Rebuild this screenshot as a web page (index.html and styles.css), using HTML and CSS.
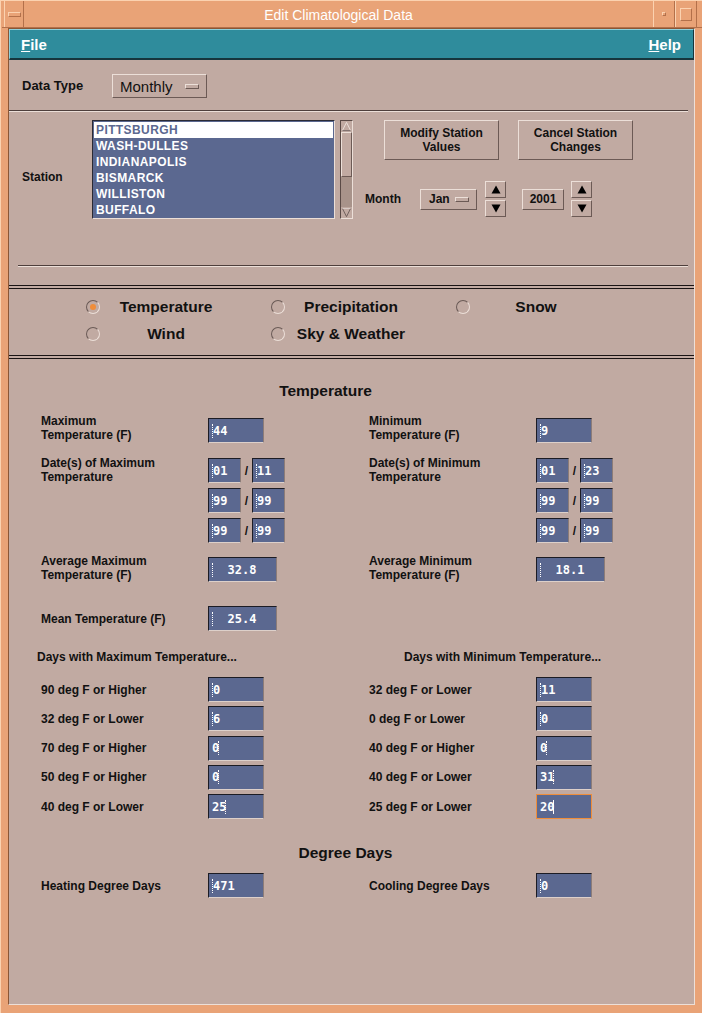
FILE: index.html
```html
<!DOCTYPE html>
<html lang="en">
<head>
    <meta charset="UTF-8">
    <title>Edit Climatological Data</title>
    <link rel="stylesheet" href="styles.css">
</head>
<body>
<div class="window">
    <div class="titlebar">
        <div class="tb-btn tb-menu"><span class="tb-dash"></span></div>
        <div class="tb-title">Edit Climatological Data</div>
        <div class="tb-btn tb-min"><span class="tb-dot"></span></div>
        <div class="tb-btn tb-max"><span class="tb-square"></span></div>
    </div>

    <div class="client">
        <div class="menubar">
            <span class="menu-item"><u>F</u>ile</span>
            <span class="menu-item"><u>H</u>elp</span>
        </div>

        <!-- data type -->
        <div class="datatype-row">
            <span class="label datatype-label">Data Type</span>
            <div class="option-menu option-large">Monthly <span class="option-ind"></span></div>
        </div>
        <div class="sep"></div>

        <!-- station picker -->
        <div class="station-row">
            <span class="label station-label">Station</span>
            <div class="station-list">
                <div class="list-item selected">PITTSBURGH</div>
                <div class="list-item">WASH-DULLES</div>
                <div class="list-item">INDIANAPOLIS</div>
                <div class="list-item">BISMARCK</div>
                <div class="list-item">WILLISTON</div>
                <div class="list-item">BUFFALO</div>
            </div>
            <div class="scrollbar">
                <svg class="scroll-arrow" viewBox="0 0 12 12"><path d="M1.5 10.5 L6 1.5 L10.5 10.5 Z" fill="none" stroke="#efe4de" stroke-width="1"/><path d="M1.5 10.5 H10.5" stroke="#6a5a56"/></svg>
                <div class="scroll-thumb"></div>
                <div class="scroll-trough"></div>
                <svg class="scroll-arrow" viewBox="0 0 12 12"><path d="M1.5 1.5 L6 10.5 L10.5 1.5 Z" fill="none" stroke="#6a5a56" stroke-width="1"/><path d="M1.5 1.5 H10.5" stroke="#efe4de"/></svg>
            </div>
            <div class="station-controls">
                <div class="station-buttons">
                    <button class="push">Modify Station<br>Values</button>
                    <button class="push">Cancel Station<br>Changes</button>
                </div>
                <div class="month-row">
                    <span class="label">Month</span>
                    <div class="option-menu option-small">Jan <span class="option-ind"></span></div>
                    <div class="spinner">
                        <span class="arrow-btn"><svg viewBox="0 0 10 9"><path d="M5 0.5 L9.5 8.5 H0.5 Z" fill="#000"/></svg></span>
                        <span class="arrow-btn"><svg viewBox="0 0 10 9"><path d="M0.5 0.5 H9.5 L5 8.5 Z" fill="#000"/></svg></span>
                    </div>
                    <div class="year-box">2001</div>
                    <div class="spinner">
                        <span class="arrow-btn"><svg viewBox="0 0 10 9"><path d="M5 0.5 L9.5 8.5 H0.5 Z" fill="#000"/></svg></span>
                        <span class="arrow-btn"><svg viewBox="0 0 10 9"><path d="M0.5 0.5 H9.5 L5 8.5 Z" fill="#000"/></svg></span>
                    </div>
                </div>
            </div>
        </div>
        <div class="sep sep-inset"></div>

        <!-- element type -->
        <div class="double-sep"></div>
        <div class="radio-grid">
            <div class="radio"><span class="radio-dot on"></span><span class="radio-text">Temperature</span></div>
            <div class="radio"><span class="radio-dot"></span><span class="radio-text">Precipitation</span></div>
            <div class="radio"><span class="radio-dot"></span><span class="radio-text">Snow</span></div>
            <div class="radio"><span class="radio-dot"></span><span class="radio-text">Wind</span></div>
            <div class="radio"><span class="radio-dot"></span><span class="radio-text">Sky &amp; Weather</span></div>
        </div>
        <div class="double-sep"></div>

        <!-- temperature values -->
        <div class="temp">
            <h2 class="section-title title-temp">Temperature</h2>

            <div class="trow trow-first">
                <span class="label">Maximum<br>Temperature (F)</span>
                <div class="cell drop4"><span class="field"><i class="caret"></i>44</span></div>
                <span class="label">Minimum<br>Temperature (F)</span>
                <div class="cell drop4"><span class="field"><i class="caret"></i>9</span></div>
            </div>

            <div class="trow trow-dates">
                <span class="label">Date(s) of Maximum<br>Temperature</span>
                <div class="cell date-stack">
                    <div class="date-pair"><span class="field date"><i class="caret"></i>01</span><span class="slash">/</span><span class="field date"><i class="caret"></i>11</span></div>
                    <div class="date-pair"><span class="field date"><i class="caret"></i>99</span><span class="slash">/</span><span class="field date"><i class="caret"></i>99</span></div>
                    <div class="date-pair"><span class="field date"><i class="caret"></i>99</span><span class="slash">/</span><span class="field date"><i class="caret"></i>99</span></div>
                </div>
                <span class="label">Date(s) of Minimum<br>Temperature</span>
                <div class="cell date-stack">
                    <div class="date-pair"><span class="field date"><i class="caret"></i>01</span><span class="slash">/</span><span class="field date"><i class="caret"></i>23</span></div>
                    <div class="date-pair"><span class="field date"><i class="caret"></i>99</span><span class="slash">/</span><span class="field date"><i class="caret"></i>99</span></div>
                    <div class="date-pair"><span class="field date"><i class="caret"></i>99</span><span class="slash">/</span><span class="field date"><i class="caret"></i>99</span></div>
                </div>
            </div>

            <div class="trow trow-avg">
                <span class="label">Average Maximum<br>Temperature (F)</span>
                <div class="cell drop3"><span class="field wide"><i class="caret"></i><span class="value">32.8</span></span></div>
                <span class="label">Average Minimum<br>Temperature (F)</span>
                <div class="cell drop3"><span class="field wide"><i class="caret"></i><span class="value">18.1</span></span></div>
            </div>

            <div class="trow trow-mean">
                <span class="label">Mean Temperature (F)</span>
                <div class="cell"><span class="field wide"><i class="caret"></i><span class="value">25.4</span></span></div>
            </div>

            <div class="trow days-head">
                <span class="label days-head-left">Days with Maximum Temperature...</span>
                <span class="label days-head-right">Days with Minimum Temperature...</span>
            </div>

            <div class="days">
                <div class="trow">
                    <span class="label">90 deg F or Higher</span>
                    <div class="cell"><span class="field"><i class="caret"></i>0</span></div>
                    <span class="label">32 deg F or Lower</span>
                    <div class="cell"><span class="field"><i class="caret"></i>11</span></div>
                </div>
                <div class="trow">
                    <span class="label">32 deg F or Lower</span>
                    <div class="cell"><span class="field"><i class="caret"></i>6</span></div>
                    <span class="label">0 deg F or Lower</span>
                    <div class="cell"><span class="field"><i class="caret"></i>0</span></div>
                </div>
                <div class="trow">
                    <span class="label">70 deg F or Higher</span>
                    <div class="cell"><span class="field">0<i class="caret after"></i></span></div>
                    <span class="label">40 deg F or Higher</span>
                    <div class="cell"><span class="field">0<i class="caret after"></i></span></div>
                </div>
                <div class="trow">
                    <span class="label">50 deg F or Higher</span>
                    <div class="cell"><span class="field">0<i class="caret after"></i></span></div>
                    <span class="label">40 deg F or Lower</span>
                    <div class="cell"><span class="field">31<i class="caret after"></i></span></div>
                </div>
                <div class="trow">
                    <span class="label">40 deg F or Lower</span>
                    <div class="cell"><span class="field">25<i class="caret after"></i></span></div>
                    <span class="label">25 deg F or Lower</span>
                    <div class="cell"><span class="field focused">20<i class="caret after solid"></i></span></div>
                </div>
            </div>

            <h2 class="section-title title-degree">Degree Days</h2>
            <div class="trow trow-degree">
                <span class="label">Heating Degree Days</span>
                <div class="cell"><span class="field"><i class="caret"></i>471</span></div>
                <span class="label">Cooling Degree Days</span>
                <div class="cell"><span class="field"><i class="caret"></i>0</span></div>
            </div>
        </div>
    </div>
</div>
</body>
</html>
```

FILE: styles.css
```css
:root {
    --frame: #e9a377;
    --frame-light: #fbd2b0;
    --frame-dark: #b3704a;
    --panel: #c1aaa2;
    --panel-light: #ecdfd8;
    --panel-dark: #6c5a55;
    --teal: #2f8c9c;
    --slate: #5b6890;
    --text: #111;
}
* {
    box-sizing: border-box;
}
body {
    margin: 0;
    background: var(--frame);
    font-family: "Liberation Sans", Arial, sans-serif;
}
.window {
    width: 702px;
    height: 1013px;
    background: var(--frame);
    padding: 0 7px 8px 7px;
    display: flex;
    flex-direction: column;
    border-left: 1px solid var(--frame-light);
    border-top: 1px solid var(--frame-light);
}

/* title bar */
.titlebar {
    height: 27px;
    display: flex;
    margin: 0 -7px 0 -6px;
    border-bottom: 1px solid var(--frame-dark);
}
.tb-btn {
    display: flex;
    align-items: center;
    justify-content: center;
    border-left: 1px solid var(--frame-light);
    border-right: 1px solid var(--frame-dark);
}
.tb-menu {
    width: 20px;
    margin-left: 2px;
}
.tb-dash {
    width: 13px;
    height: 5px;
    border: 1px solid;
    border-color: var(--frame-light) var(--frame-dark) var(--frame-dark) var(--frame-light);
}
.tb-title {
    flex: 1;
    text-align: center;
    color: #fff;
    font-size: 14px;
    line-height: 28px;
}
.tb-min {
    width: 22px;
}
.tb-dot {
    width: 4px;
    height: 4px;
    border: 1px solid;
    border-color: var(--frame-light) var(--frame-dark) var(--frame-dark) var(--frame-light);
}
.tb-max {
    width: 22px;
    margin-right: 5px;
}
.tb-square {
    width: 12px;
    height: 13px;
    border: 1px solid;
    border-color: var(--frame-light) var(--frame-dark) var(--frame-dark) var(--frame-light);
}

/* client area */
.client {
    flex: 1;
    background: var(--panel);
    border: 1px solid;
    border-color: #8a5636 var(--panel-light) var(--panel-light) #8a5636;
    color: var(--text);
}
.menubar {
    height: 31px;
    background: var(--teal);
    border: 1px solid;
    border-color: #8fd0da #16363d #16363d #8fd0da;
    border-bottom-width: 2px;
    display: flex;
    justify-content: space-between;
    align-items: center;
    padding: 0 12px 0 11px;
}
.menu-item {
    color: #fff;
    font-weight: bold;
    font-size: 15px;
}
.label {
    font-weight: bold;
    font-size: 12px;
    line-height: 14px;
    color: var(--text);
}
.datatype-row {
    height: 50px;
    padding: 2px 0 0 13px;
    display: flex;
    align-items: center;
}
.datatype-label {
    width: 90px;
    font-size: 13px;
}

/* option menus and buttons */
.option-menu {
    display: flex;
    align-items: center;
    justify-content: space-between;
    border: 1px solid;
    border-color: var(--panel-light) var(--panel-dark) var(--panel-dark) var(--panel-light);
    color: var(--text);
}
.option-large {
    width: 95px;
    height: 24px;
    padding: 0 7px 0 7px;
    font-size: 15px;
}
.option-small {
    width: 57px;
    height: 21px;
    padding: 0 7px 0 8px;
    font-size: 12px;
    font-weight: bold;
}
.option-ind {
    width: 14px;
    height: 5px;
    border: 1px solid;
    border-color: var(--panel-light) var(--panel-dark) var(--panel-dark) var(--panel-light);
}
.sep {
    height: 2px;
    margin: 0 6px 0 0;
    border-top: 1px solid #4e3f3c;
    border-bottom: 1px solid var(--panel-light);
}
.sep-inset {
    margin-left: 9px;
}
.double-sep {
    height: 4px;
    margin-top: 18px;
    border-top: 1px solid #1a1414;
    border-bottom: 1px solid #1a1414;
}

/* station */
.station-row {
    height: 153px;
    display: flex;
    align-items: flex-start;
    padding: 8px 0 0 13px;
}
.station-label {
    width: 70px;
    padding-top: 50px;
}
.station-list {
    width: 243px;
    height: 99px;
    background: var(--slate);
    border: 1px solid;
    border-color: #2a2a34 var(--panel-light) var(--panel-light) #2a2a34;
    padding: 1px;
}
.list-item {
    height: 16px;
    line-height: 16px;
    padding-left: 2px;
    color: #fff;
    font-weight: bold;
    font-size: 12px;
    letter-spacing: 0.4px;
}
.list-item.selected {
    background: #fff;
    color: #5b6890;
}
.scrollbar {
    width: 13px;
    height: 99px;
    margin-left: 5px;
    display: flex;
    flex-direction: column;
    border: 1px solid;
    border-color: #5a4a46 var(--panel-light) var(--panel-light) #5a4a46;
}
.scroll-arrow {
    width: 11px;
    height: 11px;
    flex: none;
}
.scroll-thumb {
    height: 45px;
    border: 1px solid;
    border-color: var(--panel-light) var(--panel-dark) var(--panel-dark) var(--panel-light);
}
.scroll-trough {
    flex: 1;
    background: #a8938a;
}
.station-controls {
    margin-left: 12px;
}
.station-buttons {
    display: flex;
    gap: 19px;
    margin-left: 19px;
}
.push {
    width: 115px;
    height: 40px;
    background: var(--panel);
    border: 1px solid;
    border-color: var(--panel-light) var(--panel-dark) var(--panel-dark) var(--panel-light);
    font-family: inherit;
    font-weight: bold;
    font-size: 12px;
    line-height: 14px;
    color: var(--text);
    padding: 0;
}
.month-row {
    display: flex;
    align-items: center;
    margin-top: 21px;
}
.month-row .label {
    width: 55px;
}
.spinner {
    display: flex;
    flex-direction: column;
    gap: 2px;
    margin-left: 8px;
}
.year-box + .spinner {
    margin-left: 7px;
}
.arrow-btn {
    width: 21px;
    height: 17px;
    display: flex;
    align-items: center;
    justify-content: center;
    border: 1px solid;
    border-color: var(--panel-light) var(--panel-dark) var(--panel-dark) var(--panel-light);
}
.arrow-btn svg {
    width: 10px;
    height: 9px;
}
.year-box {
    width: 42px;
    height: 21px;
    margin-left: 16px;
    line-height: 19px;
    text-align: center;
    font-weight: bold;
    font-size: 12px;
    border: 1px solid;
    border-color: var(--panel-light) var(--panel-dark) var(--panel-dark) var(--panel-light);
}

/* radio boxes */
.radio-grid {
    display: grid;
    grid-template-columns: repeat(3, 185px);
    grid-auto-rows: 27px;
    padding: 4px 0 8px 77px;
}
.radio {
    display: grid;
    grid-template-columns: 14px 132px;
    align-items: center;
}
.radio-dot {
    width: 14px;
    height: 14px;
    border-radius: 50%;
    border: 1px solid;
    border-color: #6a5a56 var(--panel-light) var(--panel-light) #6a5a56;
    display: flex;
    align-items: center;
    justify-content: center;
}
.radio-dot.on::after {
    content: "";
    width: 6px;
    height: 6px;
    border-radius: 50%;
    background: #ef8d3a;
}
.radio-text {
    text-align: center;
    font-weight: bold;
    font-size: 15.5px;
}
.radio-grid + .double-sep {
    margin-top: 0;
}

/* temperature panel */
.temp {
    padding-left: 32px;
}
.section-title {
    margin: 22px 0 0 -32px;
    font-size: 15.5px;
    line-height: 20px;
    font-weight: bold;
    text-align: center;
}
.title-temp {
    padding-right: 52px;
}
.title-degree {
    margin-top: 24px;
    padding-right: 12px;
}
.trow {
    display: grid;
    grid-template-columns: 167px 161px 167px 161px;
    align-items: start;
}
.trow-first {
    margin-top: 13px;
}
.trow-dates {
    margin-top: 13px;
}
.trow-avg {
    margin-top: 11px;
}
.trow-mean {
    margin-top: 24px;
    align-items: center;
}
.drop4 {
    padding-top: 4px;
}
.drop3 {
    padding-top: 3px;
}
.date-stack {
    display: flex;
    flex-direction: column;
    gap: 5px;
    padding-top: 2px;
}
.date-pair {
    display: flex;
    align-items: center;
}
.slash {
    width: 11px;
    text-align: center;
    font-weight: bold;
    font-size: 12px;
}
.field {
    display: flex;
    align-items: center;
    width: 56px;
    height: 25px;
    padding-left: 3px;
    background: var(--slate);
    border: 1px solid;
    border-color: #1c1c24 #8c7c78 #ddd0ca #1c1c24;
    color: #fff;
    font-family: "DejaVu Sans Mono", monospace;
    font-weight: bold;
    font-size: 12px;
}
.field.date {
    width: 33px;
}
.field.wide {
    width: 69px;
}
.field .value {
    flex: 1;
    text-align: center;
    padding-right: 5px;
}
.field.focused {
    border: 1px solid #ef8d3a;
}
.caret {
    width: 3px;
    height: 14px;
    border-left: 1px dotted #fff;
    margin-right: -2px;
}
.caret.after {
    margin: 0 0 0 -1px;
}
.caret.solid {
    border-left-style: solid;
}
.days-head {
    margin-top: 19px;
}
.days-head-left {
    grid-column: 1 / 3;
    margin-left: -4px;
}
.days-head-right {
    grid-column: 3 / 5;
    padding-left: 35px;
}
.days {
    display: flex;
    flex-direction: column;
    gap: 4.25px;
    margin-top: 13px;
}
.days .trow,
.trow-degree {
    align-items: center;
}
.trow-degree {
    margin-top: 10px;
}
```
